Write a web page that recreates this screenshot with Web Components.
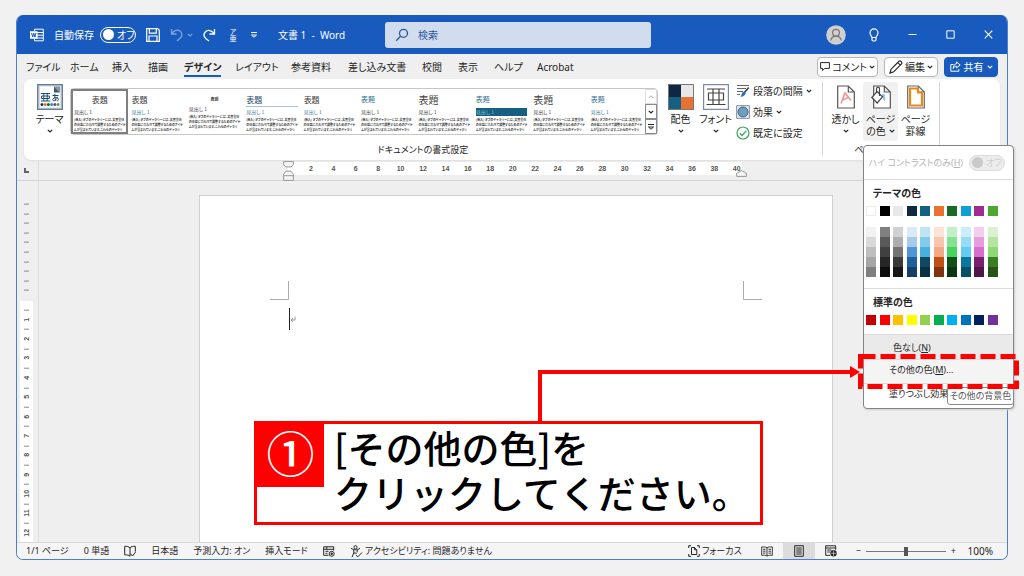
<!DOCTYPE html>
<html lang="ja">
<head>
<meta charset="utf-8">
<title>文書 1 - Word</title>
<style>
html { height: 100%; }
body { margin: 0; height: 100%; display: flex; background: #f1f1f1; color: #262626;
  font: 10px/14px "Noto Sans", "Noto Sans CJK JP", sans-serif; font-feature-settings: "palt"; }
</style>
</head>
<body>
<app-shell></app-shell>
<script>
const BASE = `
*, *::before { box-sizing: border-box; }
:host { box-sizing: border-box; display: block; }
:host([hidden]) { display: none; }
button { font: inherit; font-feature-settings: inherit; color: inherit; background: none; border: 0; padding: 0; margin: 0; white-space: nowrap; }
svg { display: block; }
`;
function define(name, css, html) {
  customElements.define(name, class extends HTMLElement {
    constructor() {
      super();
      const root = this.attachShadow({ mode: 'open' });
      root.innerHTML = '<style>' + BASE + css + '</style>' + (typeof html === 'function' ? html(this) : html);
    }
  });
}

/* ---------- icons: [width, height, markup] ---------- */
const S = 'fill="none" stroke="currentColor"';
const ICONS = {
  chevron: [6, 4, `<path d="M.8.8 3 3 5.2.8" ${S} stroke-width="1.2"/>`],
  chevronUp: [6, 4, `<path d="M.8 3 3 .8 5.2 3" ${S}/>`],
  more: [8, 8, `<path d="M1 1.5h6" ${S}/><path d="M1.5 4 4 6.3 6.5 4z" ${S}/>`],
  word: [14, 14, `<path d="M4.5 3V1.2h8.8v11.6H4.5V11M4.5 4.5h8.8M4.5 7.2h8.8M4.5 10h8.8" ${S}/><rect y="3.2" width="7.6" height="7.6" fill="#fff"/><path d="M1.6 5 2.7 9 3.8 5.3 4.9 9 6 5" fill="none" stroke="#185abd"/>`],
  save: [14, 14, `<path d="M.7.7h11L13.3 2.300V13.3H.7zM3.300.7v4.500h7V.7M3 13.300V8h8v5.300" ${S} stroke-width="1.200"/>`],
  undo: [13, 14, `<path d="M1.500 1v5h5M1.600 5.800C4 2.400 7.500 1.200 10 3s2.400 5 .3 7L7 13" ${S} stroke-width="1.300"/>`],
  redo: [13, 14, `<path d="M11.500 1v5h-5M11.400 5.800C9 2 4.500 1.500 2.300 4s-1 5.200.7 6.700L6 13" ${S} stroke-width="1.300"/>`],
  search: [14, 14, `<circle cx="8.500" cy="5.300" r="4" ${S} stroke-width="1.300"/><path d="M5.600 8.200 1.200 12.800" ${S} stroke-width="1.300"/>`],
  avatar: [20, 20, `<circle cx="10" cy="10" r="9.800" fill="#cfcfcf"/><circle cx="10" cy="7.800" r="3.400" fill="none" stroke="#777" stroke-width="1.200"/><path d="M4.800 15.500c.6-3.500 2.600-4.400 5.200-4.400s4.600.9 5.200 4.400" fill="none" stroke="#777" stroke-width="1.200"/>`],
  bulb: [12, 14, `<path d="M4 9.500C4 8 2 7.300 2 4.900a4 4 0 0 1 8 0C10 7.300 8 8 8 9.500zM4 9.500v2.300c0 .8.500 1.200 1.200 1.200h1.600c.7 0 1.200-.4 1.200-1.200V9.500" ${S} stroke-width="1.200"/>`],
  min: [9, 9, `<path d="M.5 4.500h8" ${S}/>`],
  max: [9, 9, `<path d="M.8.8h7.400v7.400H.8z" ${S}/>`],
  close: [9, 9, `<path d="M.7.7l7.600 7.600M8.300.7.7 8.300" ${S} stroke-width="1.100"/>`],
  comment: [10, 9, `<path d="M.6.600h8.800v5.800H4.800L2.600 8.400V6.400H.6z" ${S}/>`],
  pencil: [14, 14, `<path d="M1 13l1.100-3.800L10 1.300c1.400-1.100 3.600 1.100 2.500 2.600L4.700 11.800zM8.800 2.600l2.500 2.500" ${S} stroke-width="1.200"/>`],
  share: [11, 11, `<path d="M3.500 3.500H.8v6.700h8V8M6.500.9 10.200 4 6.500 6.900V5.300C4.800 5.300 3.800 6 3.200 7.500 3.200 4.800 4.500 3 6.500 2.700z" ${S}/>`],
  theme: [26, 26, `<rect x=".7" y=".7" width="24.600" height="24.600" fill="#d5dbe6" stroke="#6b7a96" stroke-width="1.400"/><path d="M3 2.500h14l6 6v15H3z" fill="#fff"/><path d="M17 2.500v6h6z" fill="#44546a"/><path d="M17 2.500h6v6z" fill="#8493ad"/><g fill="none" stroke="#1f4e69"><path d="M4 9.500h9M4 17h9.500M6.800 9.500V17M10.200 9.500V17M4.600 12h7.800v2.500H4.600z"/><path d="M15.500 11.500h6M18 9.800c-.4 3 0 5 .8 7M20.500 12.700c-.5 2.600-2.500 4.300-4 4s-.8-3 2-3.200 4.200 2.300 1.500 3.700"/></g><g><circle cx="5" cy="20.500" r="1.500" fill="#17365d"/><circle cx="8.200" cy="20.500" r="1.500" fill="#e97132"/><circle cx="11.400" cy="20.500" r="1.500" fill="#196b24"/><circle cx="14.600" cy="20.500" r="1.500" fill="#0f9ed5"/><circle cx="17.800" cy="20.500" r="1.500" fill="#a02b93"/><circle cx="21" cy="20.500" r="1.500" fill="#4ea72e"/></g>`],
  colors: [26, 26, `<path d="M0 0h13v13H0z" fill="#0e2841"/><path d="M13 0h13v13H13z" fill="#e8e8e8"/><path d="M0 13h13v13H0z" fill="#156082"/><path d="M13 13h13v13H13z" fill="#e97132"/><path d="M.5.500h25v25H.5z" fill="none" stroke="#777"/>`],
  font: [26, 26, `<path d="M.6.600h24.800v24.800H.6z" fill="#fff" stroke="#7f8aa3" stroke-width="1.200"/><path d="M4 5h18M3.500 20.500h19M10 5v15.500M16 5v15.500M5.500 9h15v7h-15z" fill="none" stroke="#444" stroke-width="1.200"/>`],
  spacing: [14, 14, `<path d="M1 1.500h12M1 4.500h9M1 7.500h6M1 10.500h3" fill="none" stroke="#666"/><path d="M12.700 3.500 8 9" stroke="#444" stroke-width="1.800"/><path d="M8.500 7.800c1.200.3 1.600 1.300.8 2.500-1 1.800-3 2.700-5 2.200 1.200-.6 1-1.700 1.500-3s1.500-2 2.700-1.700z" fill="#2e75b6"/>`],
  effects: [14, 14, `<path d="M.6.600h12.800v12.800H.6z" fill="#e4e8ef" stroke="#8a94a8"/><circle cx="7" cy="7" r="5" fill="#6f9fbe" stroke="#3b6583"/>`],
  check: [14, 14, `<circle cx="7" cy="7" r="6" fill="#fff" stroke="#3fa35b" stroke-width="1.200"/><path d="M3.800 7.200l2.300 2.300 4.200-4.600" fill="none" stroke="#3fa35b" stroke-width="1.300"/>`],
  watermark: [18, 24, `<path d="M.7 1h10.600l6 6v16H.7zM11.300 1v6h6" fill="#fff" stroke="#555" stroke-width="1.200"/><path d="M4 18.500 8 8l6 7.500M5 15.500l6.500-3.200" fill="none" stroke="#f4989d" stroke-width="1.700"/>`],
  pageColor: [20, 24, `<path d="M2.700 1h10.600l6 6v16H2.700zM13.300 1v6h6" fill="#fff" stroke="#555" stroke-width="1.200"/><path d="M11 9c3.500-1 3.500 2 3 7-2-.5-3-4-3-7z" fill="#8fc7ea"/><path d="M6 6.500l5.500 5.300-5.300 6.200L.8 12.500zM5.500 8V4c0-2.500 3-2.500 3 0v7" fill="#fff" fill-opacity=".8" stroke="#444" stroke-width="1.200"/>`],
  pageBorder: [18, 24, `<path d="M.7 1h10.600l6 6v16H.7zM11.300 1v6h6" fill="#fff" stroke="#666" stroke-width="1.200"/><path d="M3 3.500h8v4h4v13H3z" fill="none" stroke="#e8891c" stroke-width="2.200"/>`],
  book: [12, 12, `<path d="M6 3C5 1.500 3 1.300.7 1.300v8.500C3 9.800 5 10 6 11.300M6 3c1-1.500 3-1.700 5.300-1.700v5.400M6 3v8.300M6.500 8.500 8.500 11l3-4" ${S}/>`],
  macro: [12, 11, `<path d="M5.500 9.300H.7V.8h10v3.700M.7 3.300h10M2.500 5.300h3M2.500 7.300h2M3.800.8v2.500" ${S}/><circle cx="8.700" cy="7.800" r="2.500" ${S}/><circle cx="8.700" cy="7.800" r="1.200" fill="currentColor"/>`],
  access: [13, 13, `<circle cx="5.500" cy="2.300" r="1.600" ${S}/><path d="M1 3.300c3 2 6 2 9 0M3.800 4.800v3L2 12.200M7.200 4.800v2.500M3.800 8l3 .2" ${S}/><path d="M6 10l1.800 1.800L12 7.500" ${S}/>`],
  focus: [12, 12, `<path d="M3 .7H.7V3M9 .7h2.300V3M3 11.300H.7V9M9 11.300h2.300V9M3.500 2.500h3l2.300 2.300v4.700H3.500zM6.500 2.500v2.300h2.300" ${S}/>`],
  read: [12, 11, `<path d="M6 1.800C4.500.8 2.500.8.7 1v8.300c1.800-.2 3.800-.2 5.300.8 1.500-1 3.500-1 5.300-.8V1C9.500.8 7.500.8 6 1.800zM6 1.800v8.300M2 3.300h2.500M2 5.200h2.500M2 7.100h2.500M7.500 3.300H10M7.500 5.200H10M7.500 7.100H10" ${S} stroke-width=".9"/>`],
  print: [10, 12, `<path d="M.7.700h8.600v10.600H.7zM2.300 3h5.400M2.300 5h5.400M2.300 7h5.400M2.300 9h5.400" ${S}/>`],
  web: [12, 12, `<path d="M5 10.300H.7V.8h10v4M.7 3h10M2.300 5h4M2.300 7h2.500" ${S}/><circle cx="8.500" cy="8.300" r="3.200" fill="currentColor"/><path d="M8.500 5.500v5.600M6 8.300h5" stroke="#eee" stroke-width=".6"/>`],
  tabstop: [5, 5, `<path d="M1 0v4h4" fill="none" stroke="#666" stroke-width="2"/>`],
  indent: [11, 20, `<path d="M.6.600h9.800v3.200L8 5.900H3L.6 3.800zM.6 19.400v-6.200L3 10.200h5l2.400 3v6.200zM.6 14.700h9.800" fill="#f4f4f4" stroke="#999"/>`],
  indentRight: [11, 7, `<path d="M.6 6.400V3.200L5.500.6l4.900 2.600v3.200z" fill="#f4f4f4" stroke="#999"/>`],
  ret: [6, 6, `<path d="M5 .5v3.500H1.500M3 2 1 4l2 2" fill="none" stroke="#999"/>`],
  cropLeft: [20, 19, `<path d="M0 18.500h18.500V0" fill="none" stroke="#ababab"/>`],
  cropRight: [20, 19, `<path d="M20 18.500H1.500V0" fill="none" stroke="#ababab"/>`]
};
define('app-icon', ':host { flex: none; }', el => {
  const [w, h, body] = ICONS[el.getAttribute('name')];
  return `<svg width="${w}" height="${h}" viewBox="0 0 ${w} ${h}" aria-hidden="true">${body}</svg>`;
});
const icon = name => `<app-icon name="${name}"></app-icon>`;

/* ---------- toggle ---------- */
define('pill-switch', `
label { display: flex; align-items: center; gap: 6px; white-space: nowrap; }
.pill { display: flex; align-items: center; gap: 3px; width: 36px; height: 16px; padding: 0 2px; border: 1px solid currentColor; border-radius: 8px; }
input { appearance: none; width: 11px; height: 11px; margin: 0; border-radius: 50%; color: inherit; background: currentColor; flex: none; }
:host([muted]) { color: #b4b4b4; font-size: 9px; }
:host([muted]) .pill { border-color: #dcdcdc; background: #ececec; color: #d0d0d0; }
:host([muted]) input { background: #cacaca; }
`, el => `<label><span><slot></slot></span><span class="pill"><input type="checkbox"${el.hasAttribute('muted') ? ' disabled' : ''}><span>オフ</span></span></label>`);

/* ---------- title bar ---------- */
define('title-bar', `
:host { display: grid; grid-template-columns: minmax(0, 355fr) minmax(0, 266fr) minmax(0, 356fr); align-items: center; height: 39px; background: #185abd; color: #fff; padding-left: 13px; }
.left { display: flex; align-items: center; gap: 10px; }
.undo { display: flex; align-items: center; gap: 4px; color: #7fa3dc; }
.ruby { width: 14px; font-size: 7px; line-height: 7px; }
.ruby span { display: block; }
h1 { margin: 0 0 0 10px; font: inherit; white-space: pre; }
.search { display: flex; align-items: center; gap: 9px; height: 26px; padding: 0 10px; background: #d1dcee; border-radius: 3px; color: #2b579a; }
input { flex: 1; min-width: 0; border: 0; outline: 0; background: none; padding: 0; font: inherit; color: inherit; }
input::placeholder { color: #2b579a; opacity: 1; }
.right { display: flex; align-items: center; justify-content: flex-end; gap: 10px; padding-right: 5px; }
.right button { width: 28px; height: 28px; display: grid; place-items: center; }
`, `
<div class="left">${icon('word')}<pill-switch>自動保存</pill-switch>
<button aria-label="保存">${icon('save')}</button>
<button class="undo" aria-label="元に戻す">${icon('undo')}${icon('chevron')}</button>
<button aria-label="やり直し">${icon('redo')}</button>
<button class="ruby"><span>ア</span><span>亜</span></button>
<button aria-label="カスタマイズ">${icon('more')}</button>
<h1>文書 1  -  Word</h1></div>
<label class="search">${icon('search')}<input type="search" placeholder="検索" aria-label="検索"></label>
<div class="right"><button aria-label="アカウント">${icon('avatar')}</button><button aria-label="ヒント">${icon('bulb')}</button>
<button aria-label="最小化">${icon('min')}</button><button aria-label="最大化">${icon('max')}</button><button aria-label="閉じる">${icon('close')}</button></div>
`);

/* ---------- tabs ---------- */
define('tab-strip', `
:host { display: flex; align-items: center; justify-content: space-between; height: 25px; padding: 0 9px; }
nav { display: grid; grid-template-columns: 44px 42px 36px 36px 51px 56px 57px 74px 36px 36px 43px auto; padding-top: 3px; }
nav button { justify-self: start; line-height: 16px; border-bottom: 2px solid transparent; }
nav .on { font-weight: 700; border-color: #185abd; }
.actions { display: flex; gap: 6px; }
.actions button { display: flex; align-items: center; justify-content: center; gap: 2px; height: 20px; min-width: 54px; padding: 0 2px; background: #fff; border: 1px solid #b5b5b5; border-radius: 4px; }
.actions .share { gap: 3px; background: #185abd; border-color: #185abd; color: #fff; }
`, `
<nav role="tablist">${['ファイル','ホーム','挿入','描画','デザイン','レイアウト','参考資料','差し込み文書','校閲','表示','ヘルプ','Acrobat']
  .map(t => `<button role="tab"${t === 'デザイン' ? ' class="on" aria-selected="true"' : ''}>${t}</button>`).join('')}</nav>
<div class="actions"><button>${icon('comment')}コメント${icon('chevron')}</button><button>${icon('pencil')}編集${icon('chevron')}</button><button class="share">${icon('share')}共有${icon('chevron')}</button></div>
`);

/* ---------- style gallery ---------- */
define('style-card', `
:host { flex: 1 1 0; min-width: 0; height: 45px; padding: 4px 3px 0; overflow: hidden; font-family: "Noto Sans CJK JP", sans-serif; color: #404040; }
:host([selected]) { border: 2px solid #7f7f7f; padding: 2px 1px 0; }
button { display: block; width: 100%; text-align: left; }
b, i, span { display: block; font-style: normal; font-weight: 400; }
b { font-size: 8px; line-height: 13px; height: 14px; }
i { font-size: 5px; line-height: 8px; height: 8px; margin: 1px 0 2px; }
span { font-size: 3px; line-height: 5px; font-weight: 700; }
:host([kind="center"]) b { text-align: center; }
:host([kind="small"]) b { text-align: center; font-size: 4px; font-weight: 700; height: 11px; }
:host([kind="line"]) b { color: #1f4e69; border-bottom: 1px solid #a9c4d3; }
:host([kind="large"]) b { font-size: 10px; }
:host([kind="blue"]) b, :host([kind="bar"]) b { color: #2d6c8a; font-size: 7px; }
:host([kind="bar"]) i { background: #156082; color: #8fc0d6; }
:host([tint]) i { color: #3a7d9b; }
`, `<button><b>表題</b><i>見出し 1</i><span>[挿入] タブのギャラリーには、文書全体</span><span>の体裁に合わせて調整するためのアイテ</span><span>ムが含まれています。これらのギャラリ</span></button>`);
define('style-gallery', `
:host { display: flex; flex: 1 1 0; min-width: 0; height: 47px; border: 1px solid #c6c6c6; border-radius: 4px; }
.cards { display: flex; flex: 1; min-width: 0; }
.scroll { display: grid; grid-template-rows: repeat(3, 1fr); width: 12px; }
.scroll button { display: grid; place-items: center; border: 1px solid #8a8a8a; }
.scroll button:first-child { border-color: #dcdcdc; color: #aaa; }
`, `<div class="cards"><style-card kind="center" selected></style-card><style-card tint></style-card><style-card kind="small"></style-card><style-card kind="line" tint></style-card><style-card tint></style-card><style-card kind="blue"></style-card><style-card kind="large"></style-card><style-card kind="bar"></style-card><style-card kind="large"></style-card><style-card kind="blue" tint></style-card></div>
<div class="scroll"><button aria-label="上へ">${icon('chevronUp')}</button><button aria-label="下へ">${icon('chevron')}</button><button aria-label="その他">${icon('more')}</button></div>`);

/* ---------- ribbon ---------- */
define('ribbon-button', `
:host { flex: none; }
button { display: flex; flex-direction: column; align-items: center; width: 35px; height: 59px; padding-top: 2px; border-radius: 3px; line-height: 12px; }
:host([active]) button { background: #f1f1f1; }
.pic { display: grid; place-items: center; height: 26px; margin-bottom: 3px; }
.row { display: flex; align-items: center; gap: 3px; min-height: 12px; }
`, el => `<button><span class="pic">${icon(el.getAttribute('icon'))}</span><slot></slot><span class="row"><slot name="second"></slot>${el.hasAttribute('menu') ? icon('chevron') : ''}</span></button>`);
define('ribbon-bar', `
:host { display: flex; height: 81px; margin: 0 7px; padding: 3px 0 4px; background: #fff; border-radius: 7px; box-shadow: 0 1px 2px #ddd; }
section { display: flex; flex-direction: column; justify-content: space-between; border-right: 1px solid #d5d5d5; }
.format { flex: 1; min-width: 0; }
.items { display: flex; }
.format .items { padding-left: 8px; }
style-gallery { margin: 6px 5px 0 3px; }
.stack { display: flex; flex-direction: column; gap: 7px; padding: 2px 0 0 3px; width: 89px; }
.stack button { display: flex; align-items: center; gap: 3px; }
.background { width: 117px; }
.background .items { padding-left: 5px; }
.rest { width: 60px; flex: none; }
h2 { margin: 0; font: inherit; font-size: 9px; line-height: 12px; text-align: center; }
`, `
<section class="format"><div class="items">
<ribbon-button icon="theme" menu>テーマ</ribbon-button><style-gallery></style-gallery>
<ribbon-button icon="colors" menu>配色</ribbon-button><ribbon-button icon="font" menu>フォント</ribbon-button>
<div class="stack"><button>${icon('spacing')}段落の間隔${icon('chevron')}</button><button>${icon('effects')}効果${icon('chevron')}</button><button>${icon('check')}既定に設定</button></div>
</div><h2>ドキュメントの書式設定</h2></section>
<section class="background"><div class="items">
<ribbon-button icon="watermark" menu>透かし</ribbon-button><ribbon-button icon="pageColor" menu active>ページ<span slot="second">の色</span></ribbon-button><ribbon-button icon="pageBorder">ページ<span slot="second">罫線</span></ribbon-button>
</div><h2>ページの背景</h2></section><div class="rest"></div>
`);

/* ---------- rulers ---------- */
define('h-ruler', `
:host { display: flex; height: 21px; border-bottom: 1px solid #d4d4d4; }
.corner { width: 22px; border-right: 1px solid #dedede; padding: 8px 0 0 7px; }
.track { flex: 1; display: flex; justify-content: center; align-items: flex-start; padding: 2px 16px 0 0; }
.scale { position: relative; display: flex; justify-content: space-between; width: 454px; height: 13px; padding-left: 18px; background: #fff; }
.scale span { width: 10px; display: flex; justify-content: center; font: 700 7px/13px "Liberation Sans", sans-serif; color: #555; }
.first, .last { position: absolute; }
.first { left: -5px; bottom: -6px; }
.last { right: -5px; bottom: -2px; }
`, `<div class="corner">${icon('tabstop')}</div><div class="track"><div class="scale">${Array.from({ length: 20 }, (_, i) => `<span>${2 * i + 2}</span>`).join('')}<app-icon class="first" name="indent"></app-icon><app-icon class="last" name="indentRight"></app-icon></div></div>`);
define('v-ruler', `
:host { width: 22px; height: 100%; overflow: hidden; border-right: 1px solid #dedede; padding: 18px 5px 0 3px; }
.scale { display: flex; flex-direction: column; }
.margin { height: 96px; }
.body { height: 246px; margin-top: 6px; padding-top: 4px; background: #fff; }
span { flex: 1 1 0; min-height: 0; display: flex; align-items: center; justify-content: center; writing-mode: vertical-rl; transform: rotate(180deg); font: 700 7px/10px "Liberation Sans", sans-serif; color: #555; }
span:empty::before { content: ""; width: 5px; height: 1px; background: #8a8a8a; }
`, `<div class="scale margin">${'<span></span>'.repeat(10)}</div><div class="scale body">${Array.from({ length: 12 }, (_, i) => `<span></span><span>${i + 1}</span>`).join('')}<span></span></div>`);

/* ---------- document ---------- */
define('doc-page', `
:host { width: 634px; border: 1px solid #d0d0d0; border-bottom: 0; background: #fff; padding: 85px 70px 0; }
.marks { display: flex; justify-content: space-between; }
.line { display: flex; align-items: center; margin: 8px 0 0 19px; }
.caret { width: 1px; height: 22px; background: #222; }
`, `<div class="marks">${icon('cropLeft')}${icon('cropRight')}</div><div class="line"><div class="caret"></div>${icon('ret')}</div>`);

/* ---------- status bar ---------- */
define('status-bar', `
:host { display: flex; flex: none; align-items: center; justify-content: space-between; height: 17px; padding: 0 14px 0 9px; background: #f5f5f5; border-top: 1px solid #d8d8d8; font-size: 9px; line-height: 16px; white-space: nowrap; }
.side { display: flex; align-items: center; gap: 15px; height: 16px; }
.pair { display: flex; align-items: center; gap: 2px; }
.views { display: flex; height: 16px; }
.views button { width: 32px; display: grid; place-items: center; }
.views .on { background: #dcdcdc; }
.zoom { display: flex; align-items: center; gap: 5px; }
.right { gap: 9px; }
input { appearance: none; width: 80px; height: 10px; margin: 0; background: linear-gradient(#777, #777) center / 100% 1px no-repeat; }
input::-webkit-slider-thumb { appearance: none; width: 4px; height: 9px; background: #555; }
output { min-width: 28px; font-size: 10px; text-align: right; }
`, `
<div class="side"><span>1/1 ページ</span><span>0 単語</span>${icon('book')}<span>日本語</span><span>予測入力: オン</span><span>挿入モード</span>${icon('macro')}<span class="pair">${icon('access')}アクセシビリティ: 問題ありません</span></div>
<div class="side right"><button class="pair">${icon('focus')}フォーカス</button>
<div class="views"><button aria-label="閲覧モード">${icon('read')}</button><button class="on" aria-label="印刷レイアウト">${icon('print')}</button><button aria-label="Web レイアウト">${icon('web')}</button></div>
<div class="zoom"><button>−</button><input type="range" min="0" max="200" value="100" aria-label="ズーム"><button>+</button></div><output>100%</output></div>
`);

/* ---------- page colour menu ---------- */
define('swatch-grid', `
:host { display: grid; grid-template-columns: repeat(10, 10px); justify-content: space-between; grid-auto-rows: 10px; }
button { background: var(--c); }
button.light { border: 1px solid #ececec; }
`, el => el.getAttribute('colors').split(' ').map(c => `<button style="--c:#${c}" aria-label="#${c}"${c === 'ffffff' ? ' class="light"' : ''}></button>`).join(''));
define('color-menu', `
:host { background: #fff; border: 1px solid #858585; border-radius: 4px; overflow: hidden; box-shadow: 1px 1px 2px #ccc; }
pill-switch { display: flex; justify-content: flex-end; align-items: center; height: 34px; padding-right: 8px; border-bottom: 1px solid #dcdcdc; }
h3 { margin: 0; padding-left: 9px; font: inherit; font-weight: 700; line-height: 26px; }
swatch-grid { margin: 0 15px 0 2px; }
.tints { margin-top: 11px; margin-bottom: 11px; }
.standard { border-top: 1px solid #dcdcdc; padding-bottom: 9px; }
.item { display: block; width: 100%; height: 24px; padding: 0 0 4px 25px; text-align: left; font-size: 9px; border-top: 1px solid #dcdcdc; }
.none { height: 25px; padding: 2px 0 0 29px; background: #eaeaea; }
.more { background: #f4f4f4; }
`, `
<pill-switch muted>ハイ コントラストのみ(<u>H</u>)</pill-switch>
<h3>テーマの色</h3>
<swatch-grid colors="ffffff 000000 e8e8e8 0e2841 156082 e97132 196b24 0f9ed5 a02b93 4ea72e"></swatch-grid>
<swatch-grid class="tints" colors="f2f2f2 7f7f7f d1d1d1 dceaf7 c1e4f5 fbe3d6 c1f0c8 caeefb f2cfee d9f2d0 d9d9d9 595959 aeaeae a6caec 83cbeb f6c6ad 84e291 95dcf7 e59edd b4e5a2 bfbfbf 404040 747474 4e95d9 46b1e1 f2aa84 47d45a 61cbf4 d86dcd 8ed973 a6a6a6 262626 3a3a3a 215f9a 104862 c04f15 12501b 0b769f 78206e 3b7d23 7f7f7f 0d0d0d 171717 153e64 0a3041 80340d 0c3512 084f6a 501549 275317"></swatch-grid>
<div class="standard"><h3>標準の色</h3>
<swatch-grid colors="c00000 ff0000 ffc000 ffff00 92d050 00b050 00b0f0 0070c0 002060 7030a0"></swatch-grid></div>
<button class="item none">色なし(<u>N</u>)</button><button class="item more">その他の色(<u>M</u>)...</button><button class="item">塗りつぶし効果</button>
`);

/* ---------- annotation ---------- */
define('step-callout', `
:host { display: flex; align-items: flex-start; border: 3px solid #f00; background: #fff; color: #000; font-family: "Noto Sans CJK JP", sans-serif; font-feature-settings: normal; }
.badge { display: grid; place-items: center; width: 67px; height: 63px; padding-bottom: 10px; background: #f00; color: #fff; font-size: 48px; line-height: 48px; font-weight: 500; }
p { margin: 0 0 0 10px; font-size: 38px; line-height: 45px; font-weight: 500; white-space: nowrap; }
`, `<div class="badge"><slot name="step"></slot></div><p><slot></slot></p>`);

/* ---------- shell ---------- */
define('app-shell', `
:host { position: relative; flex: 1; min-width: 0; display: flex; padding: 15px 16px 16px; }
main { flex: 1; min-width: 0; min-height: 0; display: flex; flex-direction: column; border: 1px solid #4a80d0; border-top: 0; border-radius: 7px; overflow: hidden; background: #efefef; }
title-bar, tab-strip, ribbon-bar, h-ruler { flex: none; }
.work { flex: 1; min-height: 0; display: flex; overflow: hidden; }
v-ruler { flex: none; }
.canvas { flex: 1; min-width: 0; display: flex; justify-content: center; padding: 14px 14px 0 0; }
color-menu { position: absolute; top: 145px; right: 10px; width: 151px; height: 264px; }
.tip { position: absolute; top: 387px; right: 10px; width: 67px; height: 18px; background: #fff; border: 1px solid #888; border-radius: 3px; color: #555; font-size: 9px; line-height: 16px; text-align: center; white-space: nowrap; }
.target { position: absolute; top: 354px; right: 5px; }
.arrow { position: absolute; top: 370px; left: 538px; right: 172px; height: 52px; border: solid #f00; border-width: 4px 0 0 4px; }
.arrow::after { content: ""; position: absolute; right: -8px; top: -8px; border: solid transparent; border-width: 6px 0 6px 10px; border-left-color: #f00; }
step-callout { position: absolute; left: 254px; top: 421px; width: 509px; height: 104px; }
`, `
<main><title-bar></title-bar><tab-strip></tab-strip><ribbon-bar></ribbon-bar><h-ruler></h-ruler>
<div class="work"><v-ruler></v-ruler><div class="canvas"><doc-page></doc-page></div></div><status-bar></status-bar></main>
<color-menu></color-menu><div class="tip" role="tooltip">その他の背景色</div>
<svg class="target" width="161" height="35" aria-hidden="true"><rect x="2.500" y="2.500" width="156" height="30" fill="none" stroke="#f00" stroke-width="5" stroke-dasharray="15 5"/></svg>
<div class="arrow"></div>
<step-callout><span slot="step">①</span>[その他の色]を<br>クリックしてください。</step-callout>
`);
</script>
</body>
</html>
